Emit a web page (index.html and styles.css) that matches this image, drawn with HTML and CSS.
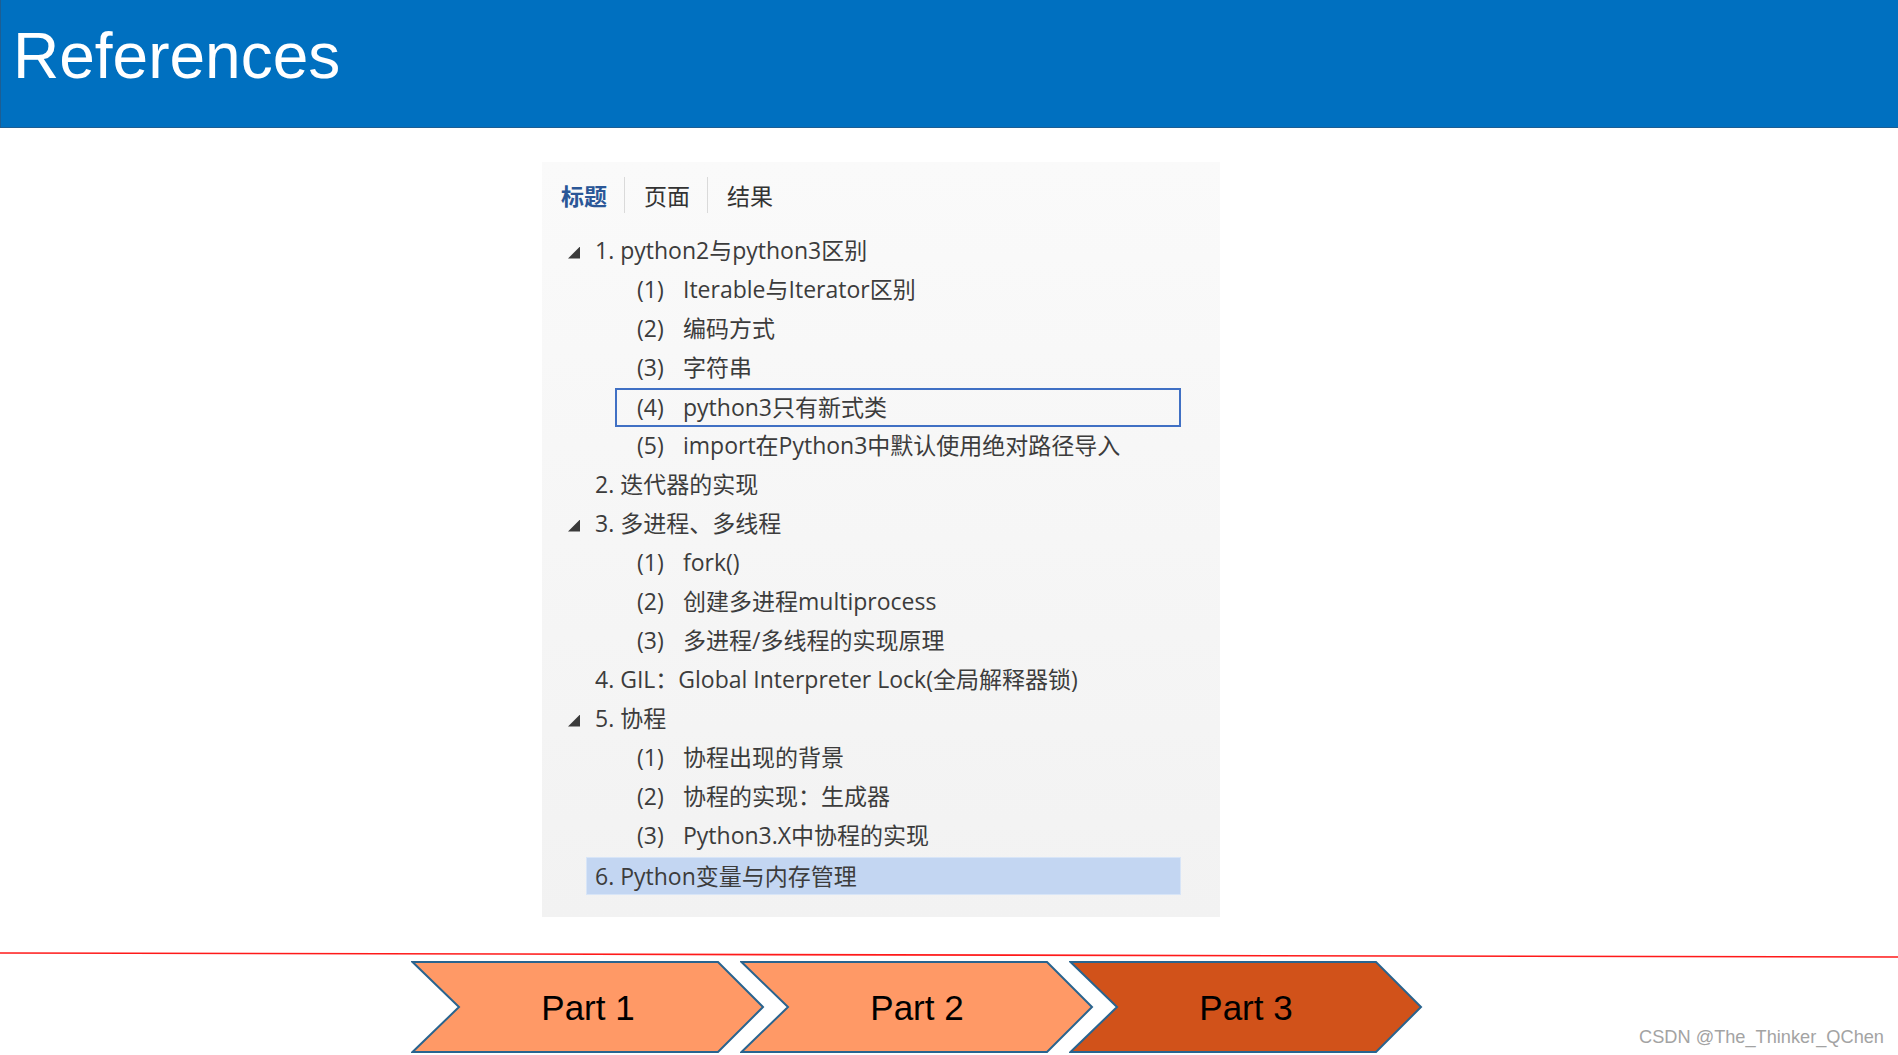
FILE: index.html
```html
<!DOCTYPE html>
<html lang="zh-CN">
<head>
    <meta charset="UTF-8">
    <meta name="viewport" content="width=device-width, initial-scale=1.0">
    <title>References</title>
    <link rel="stylesheet" href="styles.css">
</head>
<body>
    <!-- Slide title bar -->
    <header class="slide-header">
        <h1>References</h1>
    </header>

    <!-- Navigation pane copied from the document outline -->
    <main class="slide-body">
        <section class="nav-pane">
            <div class="tabs">
                <span class="tab active">标题</span>
                <span class="tab">页面</span>
                <span class="tab">结果</span>
            </div>

            <ul class="toc">
                <li class="row l1"><span class="twisty"><i></i></span><span class="label">1. python2与python3区别</span></li>
                <li class="row l2"><span class="twisty"></span><span class="label"><span class="num">(1)</span>Iterable与Iterator区别</span></li>
                <li class="row l2"><span class="twisty"></span><span class="label"><span class="num">(2)</span>编码方式</span></li>
                <li class="row l2"><span class="twisty"></span><span class="label"><span class="num">(3)</span>字符串</span></li>
                <li class="row l2"><span class="twisty"></span><span class="label selected"><span class="num">(4)</span>python3只有新式类</span></li>
                <li class="row l2"><span class="twisty"></span><span class="label"><span class="num">(5)</span>import在Python3中默认使用绝对路径导入</span></li>
                <li class="row l1"><span class="twisty"></span><span class="label">2. 迭代器的实现</span></li>
                <li class="row l1"><span class="twisty"><i></i></span><span class="label">3. 多进程、多线程</span></li>
                <li class="row l2"><span class="twisty"></span><span class="label"><span class="num">(1)</span>fork()</span></li>
                <li class="row l2"><span class="twisty"></span><span class="label"><span class="num">(2)</span>创建多进程multiprocess</span></li>
                <li class="row l2"><span class="twisty"></span><span class="label"><span class="num">(3)</span>多进程/多线程的实现原理</span></li>
                <li class="row l1"><span class="twisty"></span><span class="label">4. GIL：Global Interpreter Lock(全局解释器锁)</span></li>
                <li class="row l1"><span class="twisty"><i></i></span><span class="label">5. 协程</span></li>
                <li class="row l2"><span class="twisty"></span><span class="label"><span class="num">(1)</span>协程出现的背景</span></li>
                <li class="row l2"><span class="twisty"></span><span class="label"><span class="num">(2)</span>协程的实现：生成器</span></li>
                <li class="row l2"><span class="twisty"></span><span class="label"><span class="num">(3)</span>Python3.X中协程的实现</span></li>
                <li class="row l1"><span class="twisty"></span><span class="label current">6. Python变量与内存管理</span></li>
            </ul>
        </section>
    </main>

    <!-- Thin red rule above the progress chevrons -->
    <div class="divider">
        <svg width="1898" height="8" viewBox="0 0 1898 8">
            <line x1="0" y1="2" x2="1898" y2="6" stroke="#ff1a1a" stroke-width="1.6"/>
        </svg>
    </div>

    <!-- Progress chevrons -->
    <nav class="parts">
        <div class="chevron">
            <svg viewBox="0 0 354 92"><polygon points="1.5,1 307,1 352,46 307,91 1.5,91 48,46"/></svg>
            <span>Part 1</span>
        </div>
        <div class="chevron">
            <svg viewBox="0 0 354 92"><polygon points="1.5,1 307,1 352,46 307,91 1.5,91 48,46"/></svg>
            <span>Part 2</span>
        </div>
        <div class="chevron active">
            <svg viewBox="0 0 354 92"><polygon points="1.5,1 307,1 352,46 307,91 1.5,91 48,46"/></svg>
            <span>Part 3</span>
        </div>
    </nav>

    <div class="watermark">CSDN @The_Thinker_QChen</div>
</body>
</html>
```

FILE: styles.css
```css
/* Global Styles */
html, body {
    margin: 0;
    padding: 0;
    width: 1898px;
    height: 1055px;
    background: #ffffff;
    overflow: hidden;
    position: relative;
}

/* Title bar */
.slide-header {
    height: 128px;
    background: #0070c0;
    border-bottom: 1px solid #1d5e93;
    border-left: 1px solid #1d5e93;
    box-sizing: border-box;
    padding: 24px 0 0 12px;
}

.slide-header h1 {
    margin: 0;
    font-family: "Liberation Sans", Arial, sans-serif;
    font-weight: normal;
    font-size: 64px;
    line-height: 64px;
    color: #ffffff;
}

/* Navigation pane */
.slide-body {
    padding-top: 34px;
}

.nav-pane {
    margin-left: 542px;
    width: 678px;
    height: 755px;
    box-sizing: border-box;
    padding: 15px 39px 0 0;
    background: linear-gradient(to bottom, #fafafa, #f2f2f2);
    font-family: "Open Sans", "Noto Sans CJK SC", sans-serif;
    font-size: 23px;
    color: #3c3c3c;
}

.tabs {
    display: flex;
    height: 36px;
    padding-left: 19px;
}

.tab {
    display: flex;
    align-items: center;
    padding: 0 17px 0 19px;
    border-left: 1px solid #dadada;
    font-family: "Noto Sans CJK SC", sans-serif;
    color: #333333;
}

.tab:first-child {
    border-left: none;
    padding-left: 0;
}

.tab.active {
    color: #2b5797;
    font-weight: bold;
}

.toc {
    list-style: none;
    margin: 18px 0 0;
    padding: 0;
}

.row {
    display: flex;
    height: 39px;
    padding-left: 26px;
}

.twisty {
    width: 18px;
    flex: none;
    display: flex;
    align-items: center;
}

.twisty i {
    width: 12px;
    height: 12px;
    margin-top: 4px;
    background: #3a3a3a;
    clip-path: polygon(100% 0, 100% 100%, 0 100%);
}

.label {
    flex: 1;
    display: flex;
    align-items: center;
    box-sizing: border-box;
    line-height: 39px;
    padding-left: 9px;
    white-space: nowrap;
}

.l2 .label {
    margin-left: 29px;
    padding-left: 22px;
}

.num {
    width: 46px;
    flex: none;
}

.label.selected {
    border: 2px solid #4070c4;
    padding-left: 20px;
    margin-top: 1px;
    margin-bottom: -1px;
}

.label.current {
    background: #c3d6f2;
    border: 1px solid #d8e5f7;
    padding-left: 8px;
    margin-top: 2px;
    margin-bottom: -1px;
}

/* Red rule */
.divider {
    margin-top: 34px;
    height: 8px;
}

.divider svg {
    display: block;
}

/* Part chevrons */
.parts {
    display: flex;
    padding-left: 411px;
    margin-top: 2px;
}

.chevron {
    position: relative;
    width: 354px;
    height: 92px;
    margin-right: -25px;
    display: flex;
    align-items: center;
    justify-content: center;
}

.chevron svg {
    position: absolute;
    top: 0;
    left: 0;
    width: 354px;
    height: 92px;
}

.chevron polygon {
    fill: #ff9966;
    stroke: #29648f;
    stroke-width: 2;
}

.chevron.active polygon {
    fill: #d1521a;
}

.chevron span {
    position: relative;
    font-family: "Liberation Sans", Arial, sans-serif;
    font-size: 35px;
    line-height: 35px;
    color: #000000;
}

/* Watermark */
.watermark {
    position: absolute;
    right: 14px;
    bottom: 9px;
    font-family: "Liberation Sans", Arial, sans-serif;
    font-size: 18.2px;
    line-height: 18px;
    color: #a3a3a3;
    text-shadow: 0 0 1px #ffffff;
}
```
